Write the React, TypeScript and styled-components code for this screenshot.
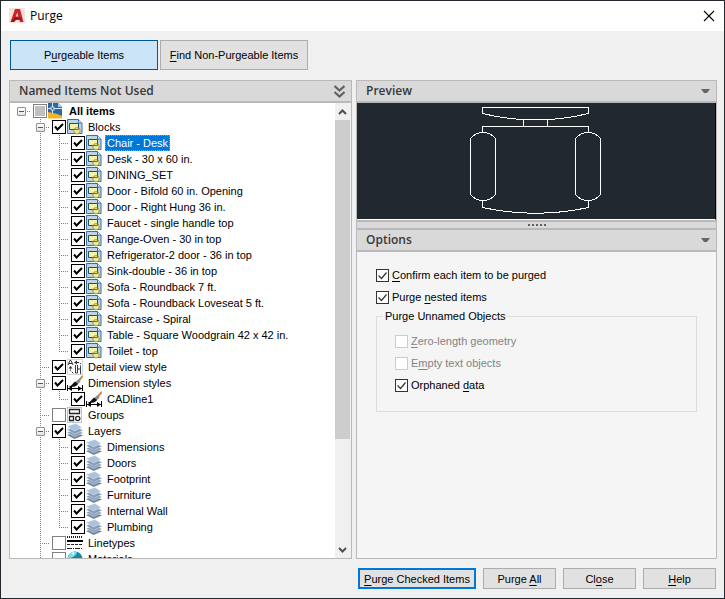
import React, { useState } from "react";
import styled, { createGlobalStyle, css } from "styled-components";

const GlobalStyle = createGlobalStyle`
  * { box-sizing: border-box; }
  body { margin: 0; background: #f0f0f0; }
  button, input, fieldset, legend { font: inherit; color: inherit; margin: 0; }
  u { text-underline-offset: 2px; text-decoration-thickness: 1px; text-decoration-skip-ink: none; }
`;

const Window = styled.div`
  display: flex;
  flex-direction: column;
  height: 100vh;
  overflow: hidden;
  border: 1px solid #23282f;
  background: #f0f0f0;
  color: #000;
  font: 11px/16px "Liberation Sans", Arial, sans-serif;
`;

const TitleBar = styled.header`
  display: flex;
  flex: none;
  align-items: center;
  gap: 5px;
  height: 30px;
  padding: 0 9px 0 8px;
  background: #fff;
  font: 12px/16px "Open Sans", "Noto Sans", sans-serif;
  h1 { flex: 1; margin: 0; font: inherit; }
`;

const IconButton = styled.button`
  display: flex;
  align-items: center;
  justify-content: center;
  flex: none;
  padding: 0;
  border: 0;
  background: transparent;
`;

const TabBar = styled.nav`
  display: flex;
  flex: none;
  gap: 2px;
  padding: 9px 9px 10px;
`;

const TabButton = styled.button<{ $active: boolean }>`
  width: 148px;
  height: 30px;
  padding: 0;
  border: 1px solid ${(p) => (p.$active ? "#005499" : "#adadad")};
  background: ${(p) => (p.$active ? "#cce4f7" : "#e1e1e1")};
`;

const Columns = styled.main`
  display: grid;
  flex: 1;
  grid-template-columns: minmax(0, 343fr) minmax(0, 361fr);
  gap: 4px;
  min-height: 0;
  padding: 0 7px 0 8px;
`;

const Panel = styled.section`
  display: flex;
  flex-direction: column;
  min-height: 0;
  border: 1px solid #b9b9b9;
  background: #f5f5f5;
`;

const PanelHeader = styled.div`
  display: flex;
  flex: none;
  align-items: center;
  justify-content: space-between;
  height: 22px;
  padding: 0 6px 0 9px;
  border-bottom: 2px solid #b9b9b9;
  background: #d9d9d9;
  color: #383838;
  h2 { margin: 0; font: 600 12px/16px "Open Sans", "Noto Sans", sans-serif; }
`;

const TreeArea = styled.div`
  display: flex;
  flex: 1;
  min-height: 0;
  overflow: hidden;
  background: #fff;
`;

const Tree = styled.ul`
  flex: 1;
  min-width: 0;
  margin: 0;
  padding: 0 0 0 2px;
  list-style: none;
`;

const TreeRow = styled.li`
  display: flex;
  align-items: center;
  height: 16px;
  white-space: nowrap;
`;

const dotsDown = "repeating-linear-gradient(to bottom, #808080 0 1px, transparent 1px 2px)";
const dotsAcross = "repeating-linear-gradient(to right, #808080 0 1px, transparent 1px 2px)";

const Guide = styled.span<{ $line?: "through" | "branch" | "last" | "root" }>`
  display: flex;
  align-items: center;
  flex: none;
  width: 19px;
  height: 16px;
  padding-left: 5px;
  background-repeat: no-repeat;
  ${(p) => p.$line === "through" && css`
    background-image: ${dotsDown};
    background-size: 1px 16px;
    background-position: 9px 0;
  `}
  ${(p) => p.$line === "root" && css`
    background-image: ${dotsAcross};
    background-size: 10px 1px;
    background-position: 9px 8px;
  `}
  ${(p) => (p.$line === "branch" || p.$line === "last") && css`
    background-image: ${dotsDown}, ${dotsAcross};
    background-size: 1px ${p.$line === "last" ? "9px" : "16px"}, 10px 1px;
    background-position: 9px 0, 9px 8px;
  `}
`;

const Expander = styled(IconButton)`
  width: 9px;
  height: 9px;
  border: 1px solid #919191;
  border-radius: 1px;
  background: linear-gradient(#fff, #e4e4e4);
  &::before { content: ""; width: 5px; height: 1px; background: #3c55a0; }
`;

const CheckWrap = styled.span<{ $tree?: boolean }>`
  display: grid;
  flex: none;
  margin-left: ${(p) => (p.$tree ? "2px" : "0")};
  > * { grid-area: 1 / 1; }
  svg { pointer-events: none; }
`;

const TreeCheck = styled.input<{ $mixed?: boolean }>`
  appearance: none;
  width: 14px;
  height: 14px;
  border: 1px solid #808080;
  background: ${(p) => (p.$mixed ? "#c0c0c0" : "#fff")};
  box-shadow: inset 0 0 0 1px #fff;
  &:checked { border-color: #000; }
  &:not(:checked) + svg { visibility: hidden; }
`;

const OptionCheck = styled.input`
  appearance: none;
  width: 13px;
  height: 13px;
  border: 1px solid #333;
  background: #fff;
  &:disabled { border-color: #ccc; }
  &:not(:checked) + svg { visibility: hidden; }
`;

const TreeLabel = styled.label<{ $selected?: boolean; $bold?: boolean }>`
  height: 16px;
  margin-left: 3px;
  padding: 0 2px;
  font-weight: ${(p) => (p.$bold ? "bold" : "normal")};
  ${(p) => p.$selected && css`
    outline: 1px dotted #ff8728;
    outline-offset: -1px;
    background: #0078d7;
    color: #fff;
  `}
`;

const TreeIcon = styled.svg`
  flex: none;
  width: 16px;
  height: 16px;
  margin-left: 1px;
`;

const ScrollBar = styled.div`
  display: flex;
  flex: none;
  flex-direction: column;
  width: 16px;
  padding-right: 1px;
  background: #f0f0f0;
`;

const ScrollButton = styled(IconButton)`
  height: 17px;
`;

const ScrollThumb = styled.div`
  flex: 319;
  background: #cdcdcd;
`;

const ScrollSpace = styled.div`
  flex: 102;
`;

const Preview = styled.div`
  display: flex;
  flex: none;
  justify-content: center;
  height: 117px;
  padding-top: 4px;
  border-right: 1px solid #000;
  border-bottom: 1px solid #fff;
  background: #212830;
`;

const Splitter = styled.div`
  display: flex;
  flex: none;
  align-items: center;
  justify-content: center;
  gap: 2px;
  height: 10px;
  border: solid #b9b9b9;
  border-width: 2px 0;
  background: #d9d9d9;
  i { width: 2px; height: 2px; background: #606060; }
`;

const Options = styled.div`
  display: flex;
  flex-direction: column;
  gap: 6px;
  padding: 15px 19px;
`;

const OptionRow = styled.label<{ $disabled?: boolean }>`
  display: flex;
  align-items: center;
  gap: 3px;
  color: ${(p) => (p.$disabled ? "#838383" : "#000")};
`;

const Group = styled.fieldset`
  display: flex;
  flex-direction: column;
  min-width: 0;
  height: 104px;
  margin-top: -3px;
  padding: 9px 18px;
  border: 1px solid #dcdcdc;
  legend { margin-left: -12px; padding: 0 2px; }
  label + label { margin-top: 6px; }
`;

const Footer = styled.footer`
  display: flex;
  flex: none;
  justify-content: flex-end;
  gap: 7px;
  padding: 9px 8px;
`;

const PushButton = styled.button<{ $primary?: boolean }>`
  width: ${(p) => (p.$primary ? "118px" : "73px")};
  height: 21px;
  padding: 0;
  border: ${(p) => (p.$primary ? "2px solid #0078d7" : "1px solid #adadad")};
  background: #e1e1e1;
  line-height: 16px;
`;

type IconName = "root" | "block" | "detail" | "dimension" | "group" | "layer" | "linetype" | "material";

const iconArt: Record<IconName, React.ReactNode> = {
  root: (
    <>
      <path d="M0 0h10l4 4v11H0z" fill="#2c67a5" />
      <path d="M10 0v4h4z" fill="#a9c7e2" />
      <path d="M0 9l5 1 9 2v3.500H0z" fill="#f5b427" />
      <path d="M7 10l7-3v6z" fill="#2c67a5" />
      <path d="M4.500 0v10M0 5.500h14" stroke="#d9e8f5" fill="none" />
      <rect x="3" y="4" width="3" height="3" fill="#2c67a5" stroke="#fff" strokeWidth=".7" />
    </>
  ),
  block: (
    <>
      <path d="M.5 .5h11l3.500 3.500v10.500H.5z" fill="#b9d5ea" stroke="#3b719f" />
      <path d="M11.500 .5v3.500h3.500" fill="#e9f4fb" stroke="#3b719f" />
      <path d="M2.500 4.500h9v6h-9z" fill="#f6f2a4" stroke="#2e4a5c" />
      <circle cx="10" cy="11.800" r="3.200" fill="#efe889" stroke="#8b8848" strokeWidth=".8" />
      <path d="M7 10.500h4.500V8" fill="none" stroke="#4a5a50" strokeWidth=".8" />
    </>
  ),
  detail: (
    <>
      <rect x=".5" y=".5" width="15" height="15" fill="#fff" stroke="#d6d6d6" />
      <path d="M1 6l2-4.500h1L6 6M2 4.500h3" stroke="#333" fill="none" />
      <path d="M7 3.500l3-2v4z" fill="#333" />
      <path d="M10 3.500h2l2 1.500M3.500 7.500v4l3 3" stroke="#333" fill="none" strokeDasharray="2 1" />
      <path d="M1.500 9.500l2-2.500 2 2.500z" fill="#333" />
      <path d="M8.500 6v8h2v-4h3v5M10.500 10V6M13.500 10V6.500" stroke="#34414c" fill="none" />
    </>
  ),
  dimension: (
    <>
      <path d="M15.500 0L9 7l2 1.500L16 2z" fill="#c7834d" />
      <path d="M11 4.500l2.500 2-3 3-2.500-2z" fill="#8a8a8a" />
      <path d="M8 6.500l3 2.500C9 12 6 12 1.500 12 5 10.500 5.500 8.500 8 6.500z" fill="#111" />
      <path d="M.5 10v6M15.500 10v6M1 13.500h14" stroke="#000" fill="none" />
      <path d="M1 13.500l4-2.500v5zM15 13.500l-4-2.500v5z" fill="#000" />
    </>
  ),
  group: (
    <>
      <rect x=".5" y=".5" width="14" height="15" fill="#fff" stroke="#7a88a8" strokeDasharray="1 1" />
      <path d="M2.500 2.500h10v4h-10zM2.500 9.500h4v4h-4z" fill="#fff" stroke="#222" strokeWidth="1.300" />
      <circle cx="10.700" cy="11.500" r="2.100" fill="#fff" stroke="#222" strokeWidth="1.300" />
    </>
  ),
  layer: (
    <>
      <path d="M0 12l9-3 7 3.500L7.500 16z" fill="#71859c" />
      <path d="M0 9.500l9-3.500 7 4L7.500 13.500z" fill="#8a9fb8" stroke="#e6edf4" strokeWidth=".5" />
      <path d="M0 6.500l9-3 7 4L7.500 11z" fill="#839ab5" stroke="#e6edf4" strokeWidth=".5" />
      <path d="M0 3.500L9 .5l6 4L7.500 8z" fill="#a9c3de" stroke="#e6edf4" strokeWidth=".5" />
    </>
  ),
  linetype: (
    <>
      <path d="M0 2h16" stroke="#222" strokeWidth="2" strokeDasharray="1 1" />
      <path d="M0 6h16" stroke="#000" strokeWidth="2" />
      <path d="M0 9.500h16" stroke="#222" strokeDasharray="3 1" />
      <path d="M0 13.500h16" stroke="#222" strokeDasharray="5 1 1 1" />
    </>
  ),
  material: (
    <>
      <circle cx="8" cy="8" r="7.500" fill="#168aa5" />
      <path d="M1 7a7 7 0 0 1 9-6C9 5 5 7 1 7z" fill="#7fe0ec" />
      <path d="M4 2l3-1v3z" fill="#e8ffff" />
    </>
  ),
};

type Item = { label: string; level: number; icon: IconName; open?: boolean; last?: boolean; unchecked?: boolean };

const child = (icon: IconName) => (label: string, i: number, all: string[]): Item => ({
  label,
  level: 2,
  icon,
  last: i === all.length - 1,
});

const items: Item[] = [
  { label: "All items", level: 0, icon: "root", open: true, unchecked: true },
  { label: "Blocks", level: 1, icon: "block", open: true },
  ...[
    "Chair - Desk",
    "Desk - 30 x 60 in.",
    "DINING_SET",
    "Door - Bifold 60 in. Opening",
    "Door - Right Hung 36 in.",
    "Faucet - single handle top",
    "Range-Oven - 30 in top",
    "Refrigerator-2 door - 36 in top",
    "Sink-double - 36 in top",
    "Sofa - Roundback 7 ft.",
    "Sofa - Roundback Loveseat 5 ft.",
    "Staircase - Spiral",
    "Table - Square Woodgrain 42 x 42 in.",
    "Toilet - top",
  ].map(child("block")),
  { label: "Detail view style", level: 1, icon: "detail" },
  { label: "Dimension styles", level: 1, icon: "dimension", open: true },
  ...["CADline1"].map(child("dimension")),
  { label: "Groups", level: 1, icon: "group", unchecked: true },
  { label: "Layers", level: 1, icon: "layer", open: true },
  ...["Dimensions", "Doors", "Footprint", "Furniture", "Internal Wall", "Plumbing"].map(child("layer")),
  { label: "Linetypes", level: 1, icon: "linetype", unchecked: true },
  { label: "Materials", level: 1, icon: "material", unchecked: true },
];

function TreeNode({ item, id, selected }: { item: Item; id: string; selected: boolean }) {
  const line = item.level === 0 ? "root" : item.last ? "last" : "branch";
  return (
    <TreeRow>
      {item.level > 0 && <Guide />}
      {item.level > 1 && <Guide $line="through" />}
      <Guide $line={line}>{item.open && <Expander aria-label={`Collapse ${item.label}`} />}</Guide>
      <CheckWrap $tree>
        <TreeCheck type="checkbox" id={id} defaultChecked={!item.unchecked} $mixed={item.level === 0} />
        <svg width="14" height="14" viewBox="0 0 14 14">
          <path d="M3 6.500l2.500 3L11 4" fill="none" stroke="#000" strokeWidth="2" />
        </svg>
      </CheckWrap>
      <TreeIcon viewBox="0 0 16 16">{iconArt[item.icon]}</TreeIcon>
      <TreeLabel htmlFor={id} $selected={selected} $bold={item.level === 0}>
        {item.label}
      </TreeLabel>
    </TreeRow>
  );
}

function Option({ children, checked, disabled }: { children: React.ReactNode; checked?: boolean; disabled?: boolean }) {
  return (
    <OptionRow $disabled={disabled}>
      <CheckWrap>
        <OptionCheck type="checkbox" defaultChecked={checked} disabled={disabled} />
        <svg width="13" height="13" viewBox="0 0 13 13">
          <path d="M2.500 6.500l3 3 5-6" fill="none" stroke="#333" strokeWidth="1.200" />
        </svg>
      </CheckWrap>
      <span>{children}</span>
    </OptionRow>
  );
}

function Collapse({ name }: { name: string }) {
  return (
    <IconButton aria-label={`Collapse ${name}`}>
      <svg width="9" height="5" viewBox="0 0 9 5">
        <path d="M0 0h9L6 4H3z" fill="#666" />
      </svg>
    </IconButton>
  );
}

export default function App() {
  const [tab, setTab] = useState(0);
  return (
    <>
      <GlobalStyle />
      <Window>
        <TitleBar>
          <svg width="16" height="16" viewBox="0 0 16 16">
            <path d="M0 0h16v15H0z" fill="#f9e1dc" />
            <path d="M1.500 14L6 1h5l3.500 13h-3.500l-1-3-4 .5-1 2.500z" fill="#c8262c" />
            <path d="M8.200 4.500L6.800 8.500h2.400z" fill="#f9e1dc" />
            <path d="M1.500 14L6 9l5 .5 2 2-6 .5-2 2z" fill="#94171c" />
          </svg>
          <h1>Purge</h1>
          <IconButton aria-label="Close window">
            <svg width="12" height="12" viewBox="0 0 12 12">
              <path d="M1 1l10 10M11 1L1 11" stroke="#000" strokeWidth="1.100" />
            </svg>
          </IconButton>
        </TitleBar>

        <TabBar>
          <TabButton $active={tab === 0} onClick={() => setTab(0)}>P<u>u</u>rgeable Items</TabButton>
          <TabButton $active={tab === 1} onClick={() => setTab(1)}><u>F</u>ind Non-Purgeable Items</TabButton>
        </TabBar>

        <Columns>
          <Panel>
            <PanelHeader>
              <h2>Named Items Not Used</h2>
              <IconButton aria-label="Collapse panels">
                <svg width="11" height="13" viewBox="0 0 11 13">
                  <path d="M.5 1l5 4.500 5-4.500M.5 7l5 4.500 5-4.500" fill="none" stroke="#606060" strokeWidth="2.200" />
                </svg>
              </IconButton>
            </PanelHeader>
            <TreeArea>
              <Tree>
                {items.map((item, i) => (
                  <TreeNode key={item.label} item={item} id={`item-${i}`} selected={item.label === "Chair - Desk"} />
                ))}
              </Tree>
              <ScrollBar>
                <ScrollButton aria-label="Scroll up">
                  <svg width="9" height="6" viewBox="0 0 9 6">
                    <path d="M1 5l3.500-3.500L8 5" fill="none" stroke="#505050" strokeWidth="2" />
                  </svg>
                </ScrollButton>
                <ScrollThumb />
                <ScrollSpace />
                <ScrollButton aria-label="Scroll down">
                  <svg width="9" height="6" viewBox="0 0 9 6">
                    <path d="M1 1l3.500 3.500L8 1" fill="none" stroke="#505050" strokeWidth="2" />
                  </svg>
                </ScrollButton>
              </ScrollBar>
            </TreeArea>
          </Panel>

          <Panel>
            <PanelHeader>
              <h2>Preview</h2>
              <Collapse name="preview" />
            </PanelHeader>
            <Preview>
              <svg width="133" height="107" viewBox="0 0 133 107" fill="none" stroke="#fff" shapeRendering="crispEdges">
                <path d="M12.500 .5h106v6Q65.500 19.500 12.500 6.500z" />
                <path d="M53.500 12.500v7M77.500 12.500v7M12.500 25.500v-6h106v6" />
                <path d="M.5 31.500Q5.500 25.500 13 25.500T25.500 31.500v56Q20.500 93.500 13 93.500T.5 87.500z" />
                <path d="M105.500 31.500Q110.500 25.500 118 25.500T130.500 31.500v56Q125.500 93.500 118 93.500T105.500 87.500z" />
                <path d="M12.500 93.500v7Q65.500 112 118.500 100.500v-7" />
              </svg>
            </Preview>
            <Splitter><i /><i /><i /><i /><i /></Splitter>
            <PanelHeader>
              <h2>Options</h2>
              <Collapse name="options" />
            </PanelHeader>
            <Options>
              <Option checked><u>C</u>onfirm each item to be purged</Option>
              <Option checked>Purge <u>n</u>ested items</Option>
              <Group>
                <legend>Purge Unnamed Objects</legend>
                <Option disabled><u>Z</u>ero-length geometry</Option>
                <Option disabled>E<u>m</u>pty text objects</Option>
                <Option checked>Orphaned <u>d</u>ata</Option>
              </Group>
            </Options>
          </Panel>
        </Columns>

        <Footer>
          <PushButton $primary><u>P</u>urge Checked Items</PushButton>
          <PushButton>Purge <u>A</u>ll</PushButton>
          <PushButton>Cl<u>o</u>se</PushButton>
          <PushButton><u>H</u>elp</PushButton>
        </Footer>
      </Window>
    </>
  );
}
